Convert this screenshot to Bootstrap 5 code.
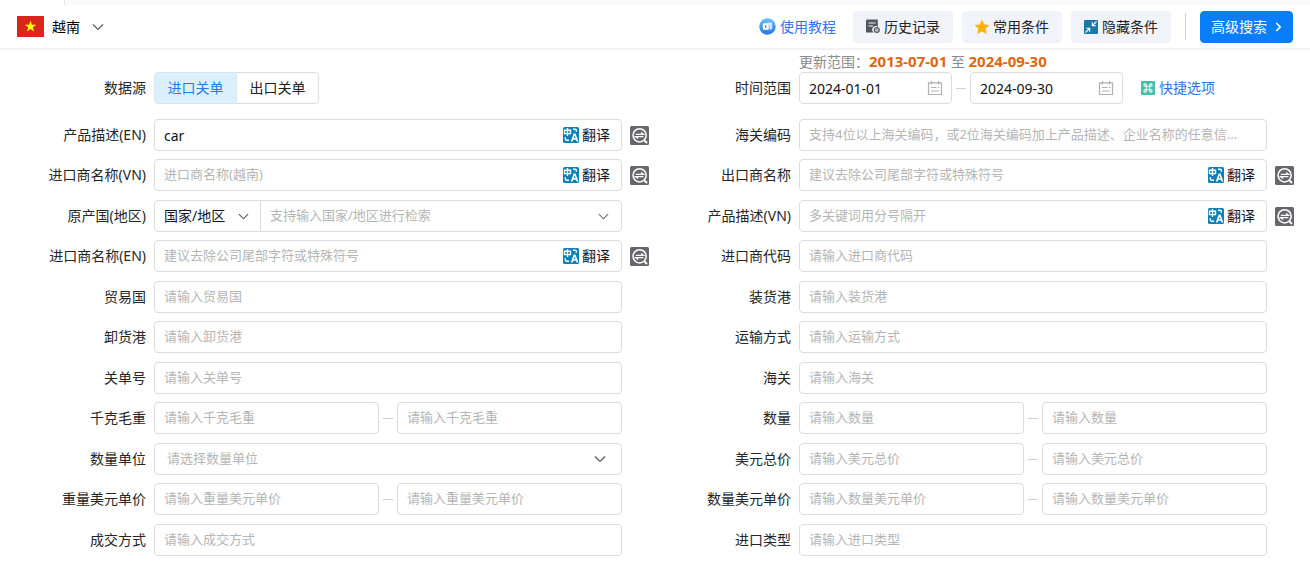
<!DOCTYPE html>
<html lang="zh-CN">
<head>
<meta charset="utf-8">
<meta name="viewport" content="width=device-width, initial-scale=1">
<title>越南 - 高级搜索</title>
<link href="https://cdn.jsdelivr.net/npm/bootstrap@5.3.0/dist/css/bootstrap.min.css" rel="stylesheet">
<script defer src="https://cdn.jsdelivr.net/npm/bootstrap@5.3.0/dist/js/bootstrap.bundle.min.js"></script>
<style>
  body { font-family: "Noto Sans", "Noto Sans CJK SC", sans-serif; font-size: 14px; line-height: 20px; color: #262626; background: #fff; }
  svg { flex: none; display: block; }
  .top-strip { height: 5px; margin-left: 64px; background: #fafafa; border-left: 1px solid #e4e4e4; }
  .topbar { min-height: 45px; padding: 0 17px; border-bottom: 2px solid #f2f2f2; }
  .btn { --bs-btn-font-size: 14px; --bs-btn-line-height: 20px; --bs-btn-padding-y: 5px; --bs-btn-padding-x: 12px; --bs-btn-border-radius: 4px; white-space: nowrap; }
  .btn-soft { --bs-btn-bg: #f1f3fa; --bs-btn-color: #222; --bs-btn-border-color: #f1f3fa; --bs-btn-hover-bg: #e6e9f5; }
  .btn-search { --bs-btn-bg: #087efb; --bs-btn-border-color: #087efb; --bs-btn-color: #fff; --bs-btn-padding-x: 10px; --bs-btn-hover-bg: #0069dc; --bs-btn-hover-color: #fff; }
  .blue-link { color: #3473e8; text-decoration: none; white-space: nowrap; }
  .quick-link { margin-left: 18px; }
  .split { width: 1px; height: 27px; background: #cfcfcf; margin: 0 5px; }
  .search-form { padding: 0 15px 8px 5px; }
  .stack-rows > .line { margin-bottom: 8px; }
  .stack-rows > .line:nth-of-type(even) { margin-bottom: 9px; }
  .line { display: flex; align-items: center; gap: 8px; height: 32px; }
  .first-line { margin-bottom: 15px; }
  .lbl { width: 141px; flex: none; text-align: right; white-space: nowrap; }
  .update-note { height: 22px; line-height: 22px; margin: 0 0 0 149px; color: #8a8a8a; white-space: nowrap; }
  .update-note strong { color: #e0660f; font-weight: 700; font-size: 15px; }
  .note-space { height: 22px; }
  .tail { width: 20px; flex: none; }
  .box { display: flex; align-items: center; flex: 1 1 0; min-width: 0; height: 32px; border: 1px solid #dcdcdc; border-radius: 4px; background: #fff; }
  .box > .form-control, .box > .form-select { border: 0; background-color: transparent; color: #111; font-size: 14px; line-height: 20px; padding: 0 9px; height: 30px; min-width: 0; border-radius: 4px; }
  .box > .form-control:placeholder-shown { font-size: 13px; padding-bottom: 2px; text-overflow: ellipsis; }
  .box > .form-control::placeholder { color: #b5b5b5; opacity: 1; }
  .box > .kind { width: 106px; flex: none; border-right: 1px solid #dcdcdc; border-radius: 4px 0 0 4px; padding-right: 24px; color: #15152a; background-position: right 11px center; background-size: 11px 11px; }
  .box > .unit { padding: 0 36px 2px 12px; font-size: 13px; color: #b5b5b5; background-position: right 15px center; background-size: 12px 12px; }
  .form-select { background-image: url("data:image/svg+xml,%3Csvg xmlns='http://www.w3.org/2000/svg' viewBox='0 0 12 12'%3E%3Cpath d='M1 3.5l5 5 5-5' fill='none' stroke='%23555' stroke-width='1.2'/%3E%3C/svg%3E"); }
  .dash { width: 10px; height: 1px; background: #cfcfcf; flex: none; margin: 0 4px; }
  .pair { display: flex; align-items: center; flex: 1 1 0; min-width: 0; }
  .date-box { flex: 0 1 153px; }
  .inner-end { margin-right: 8px; }
  .translate { border: 0; background: none; padding: 0; margin-right: 11px; color: #15152a; display: flex; align-items: center; gap: 3px; white-space: nowrap; line-height: 20px; }
  .plain-icon { border: 0; background: none; padding: 0; }
  .source-group { width: 165px; }
  .source-group .btn { --bs-btn-color: #222; --bs-btn-border-color: #dcdcdc; --bs-btn-bg: #fff; --bs-btn-active-bg: #dcf0fb; --bs-btn-active-color: #1a7df0; --bs-btn-active-border-color: #d3e9f5; flex: 1 1 0; --bs-btn-padding-x: 0; }
</style>
</head>
<body>
<svg width="0" height="0" class="position-absolute" aria-hidden="true">
  <symbol id="i-trans" viewBox="0 0 16 16">
    <rect width="16" height="16" rx="1.5" fill="#1080b8"/>
    <path d="M1.5 3.2h6v3.4h-6zM4.5 1v8" fill="none" stroke="#fff" stroke-width="1.4"/>
    <path d="M8.6 14.5l2.7-7.3h.6l2.7 7.3M9.6 12h4" fill="none" stroke="#fff" stroke-width="1.6"/>
    <path d="M10 2.2h2.3q1 0 1 1v1.6M2.3 10.3v1.5q0 1.4 1.4 1.4H6" fill="none" stroke="#fff" stroke-width="1.4"/>
  </symbol>
  <symbol id="i-scan" viewBox="0 0 19 19">
    <rect width="19" height="19" rx="1.5" fill="#66666c"/>
    <circle cx="9.6" cy="9.3" r="6.6" fill="none" stroke="#fff" stroke-width="1.5"/>
    <path d="M14 14l3 3" stroke="#fff" stroke-width="1.8"/>
    <path d="M5.8 8.4h7.8l-2.5-2M13.4 10.6H5.6l2.5 2" fill="none" stroke="#fff" stroke-width="1.3"/>
  </symbol>
  <symbol id="i-cal" viewBox="0 0 16 16">
    <path d="M1.5 2.8h13v11.7h-13zM4.5 1v3.5M11.5 1v3.5M4 7.5h5.5M11 7.5h1.5M4 11h8" fill="none" stroke="#b0b0b0" stroke-width="1.2"/>
  </symbol>
  <symbol id="i-down" viewBox="0 0 12 12"><path d="M1 3.5l5 5 5-5" fill="none" stroke="currentColor" stroke-width="1.1"/></symbol>
</svg>

<div class="top-strip"></div>
<header class="topbar d-flex align-items-center justify-content-between">
  <button type="button" class="plain-icon d-flex align-items-center">
    <svg width="27" height="21" viewBox="0 0 27 21"><rect width="27" height="21" fill="#da251d"/><path d="M13.5 4.6l1.4 4.1h4.4l-3.5 2.6 1.3 4.2-3.6-2.5-3.6 2.5 1.3-4.2-3.5-2.6h4.4z" fill="#ff0"/></svg>
    <span class="ms-2 me-2">越南</span>
    <svg width="12" height="12" class="ms-1" color="#555"><use href="#i-down"/></svg>
  </button>
  <div class="d-flex align-items-center" style="gap:9px">
    <a href="#" class="blue-link d-flex align-items-center gap-1 me-2">
      <svg width="17" height="17" viewBox="0 0 17 17"><defs><linearGradient id="g" x1="0" y1="0" x2="0" y2="1"><stop stop-color="#70c2fb"/><stop offset="1" stop-color="#2673e6"/></linearGradient></defs><circle cx="8.5" cy="8.5" r="8.3" fill="url(#g)"/><rect x="3.8" y="5.3" width="6" height="6.4" rx="1" fill="#fff"/><path d="M8.4 4.6h3.7q1 0 1 1v5q0 1-1 1h-1.6V7.2H8.4z" fill="#d3eafd"/><path d="M6.7 7v3" stroke="#4a9df2" stroke-width="1.4"/></svg>
      使用教程</a>
    <button type="button" class="btn btn-soft d-flex align-items-center gap-1">
      <svg width="14" height="15" viewBox="0 0 14 15"><path d="M1.2.5h10.6v7.2a3.5 3.5 0 0 0-4 5.8H0V1.7Q0 .5 1.2.5z" fill="#55565c"/><path d="M2.5 4h7M2.5 7h4.5" stroke="#f1f3fa" stroke-width="1"/><circle cx="10.8" cy="11" r="2.4" fill="none" stroke="#55565c" stroke-width="1.3"/><path d="M10.5 9.8v1.5h1.3" fill="none" stroke="#55565c" stroke-width=".8"/></svg>
      历史记录</button>
    <button type="button" class="btn btn-soft d-flex align-items-center gap-1">
      <svg width="14" height="14" viewBox="0 0 14 14"><path d="M7 .3l2 4.4 4.9.6-3.6 3.3.9 4.9L7 11.1l-4.2 2.4.9-4.9L.1 5.3 5 4.7z" fill="#fbb107" stroke="#fbb107" stroke-linejoin="round" stroke-width=".6"/></svg>
      常用条件</button>
    <button type="button" class="btn btn-soft d-flex align-items-center gap-1">
      <svg width="14" height="14" viewBox="0 0 14 14"><rect width="14" height="14" rx="1" fill="#1878a8"/><path d="M12.5 1.5L8.5 5.5M8.3 2.3v3.4h3.6M1.5 12.5l4-4M2.2 8.3h3.5v3.5" fill="none" stroke="#fff" stroke-width="1.1"/></svg>
      隐藏条件</button>
    <span class="split"></span>
    <button type="submit" form="search" class="btn btn-search d-flex align-items-center gap-2">高级搜索
      <svg width="7" height="10" viewBox="0 0 7 10"><path d="M1.2 1l4 4-4 4" fill="none" stroke="#fff" stroke-width="1.6"/></svg></button>
  </div>
</header>

<form id="search" class="search-form row g-0">
  <div class="col-6">
    <div class="note-space"></div>
    <div class="line first-line">
      <span class="lbl" id="src">数据源</span>
      <div class="btn-group source-group" role="group" aria-labelledby="src">
        <input type="radio" class="btn-check" name="source" id="s1" checked><label class="btn" for="s1">进口关单</label>
        <input type="radio" class="btn-check" name="source" id="s2"><label class="btn" for="s2">出口关单</label>
      </div>
    </div>
    <div class="stack-rows">
      <div class="line"><label class="lbl" for="a1">产品描述(EN)</label>
        <div class="box"><input class="form-control" id="a1" value="car"><button type="button" class="translate"><svg width="16" height="16"><use href="#i-trans"/></svg>翻译</button></div>
        <button type="button" class="plain-icon tail" aria-label="精确"><svg width="19" height="19"><use href="#i-scan"/></svg></button></div>
      <div class="line"><label class="lbl" for="a2">进口商名称(VN)</label>
        <div class="box"><input class="form-control" id="a2" placeholder="进口商名称(越南)"><button type="button" class="translate"><svg width="16" height="16"><use href="#i-trans"/></svg>翻译</button></div>
        <button type="button" class="plain-icon tail" aria-label="精确"><svg width="19" height="19"><use href="#i-scan"/></svg></button></div>
      <div class="line"><label class="lbl" for="a3">原产国(地区)</label>
        <div class="box"><select class="form-select kind" aria-label="类型"><option>国家/地区</option></select><input class="form-control" id="a3" placeholder="支持输入国家/地区进行检索"><svg width="11" height="11" class="me-2" color="#666"><use href="#i-down"/></svg><span class="ps-1"></span></div>
        <span class="tail"></span></div>
      <div class="line"><label class="lbl" for="a4">进口商名称(EN)</label>
        <div class="box"><input class="form-control" id="a4" placeholder="建议去除公司尾部字符或特殊符号"><button type="button" class="translate"><svg width="16" height="16"><use href="#i-trans"/></svg>翻译</button></div>
        <button type="button" class="plain-icon tail" aria-label="精确"><svg width="19" height="19"><use href="#i-scan"/></svg></button></div>
      <div class="line"><label class="lbl" for="a5">贸易国</label><div class="box"><input class="form-control" id="a5" placeholder="请输入贸易国"></div><span class="tail"></span></div>
      <div class="line"><label class="lbl" for="a6">卸货港</label><div class="box"><input class="form-control" id="a6" placeholder="请输入卸货港"></div><span class="tail"></span></div>
      <div class="line"><label class="lbl" for="a7">关单号</label><div class="box"><input class="form-control" id="a7" placeholder="请输入关单号"></div><span class="tail"></span></div>
      <div class="line"><label class="lbl" for="a8">千克毛重</label><div class="pair"><div class="box"><input class="form-control" id="a8" placeholder="请输入千克毛重"></div><span class="dash"></span><div class="box"><input class="form-control" aria-label="千克毛重上限" placeholder="请输入千克毛重"></div></div><span class="tail"></span></div>
      <div class="line"><label class="lbl" for="a9">数量单位</label><div class="box"><select class="form-select unit" id="a9"><option>请选择数量单位</option></select></div><span class="tail"></span></div>
      <div class="line"><label class="lbl" for="a10">重量美元单价</label><div class="pair"><div class="box"><input class="form-control" id="a10" placeholder="请输入重量美元单价"></div><span class="dash"></span><div class="box"><input class="form-control" aria-label="重量美元单价上限" placeholder="请输入重量美元单价"></div></div><span class="tail"></span></div>
      <div class="line"><label class="lbl" for="a11">成交方式</label><div class="box"><input class="form-control" id="a11" placeholder="请输入成交方式"></div><span class="tail"></span></div>
    </div>
  </div>

  <div class="col-6">
    <p class="update-note">更新范围：<strong>2013-07-01</strong> 至 <strong>2024-09-30</strong></p>
    <div class="line first-line">
      <label class="lbl" for="d1">时间范围</label>
      <div class="pair">
        <div class="box date-box"><input class="form-control" id="d1" value="2024-01-01"><svg width="16" height="16" class="inner-end"><use href="#i-cal"/></svg></div>
        <span class="dash"></span>
        <div class="box date-box"><input class="form-control" aria-label="结束日期" value="2024-09-30"><svg width="16" height="16" class="inner-end"><use href="#i-cal"/></svg></div>
        <a href="#" class="blue-link quick-link d-flex align-items-center gap-1"><svg width="14" height="14" viewBox="0 0 14 14"><rect width="14" height="14" rx="1" fill="#45bfa8"/><path d="M5.3 5.3H4.1a1.2 1.2 0 1 1 1.2-1.2v5.8a1.2 1.2 0 1 1-1.2-1.2h5.8a1.2 1.2 0 1 1-1.2 1.2V4.1a1.2 1.2 0 1 1 1.2 1.2z" fill="none" stroke="#fff" stroke-width="1.1"/></svg>快捷选项</a>
      </div>
    </div>
    <div class="stack-rows">
      <div class="line"><label class="lbl" for="b1">海关编码</label><div class="box"><input class="form-control" id="b1" placeholder="支持4位以上海关编码，或2位海关编码加上产品描述、企业名称的任意信..."></div><span class="tail"></span></div>
      <div class="line"><label class="lbl" for="b2">出口商名称</label>
        <div class="box"><input class="form-control" id="b2" placeholder="建议去除公司尾部字符或特殊符号"><button type="button" class="translate"><svg width="16" height="16"><use href="#i-trans"/></svg>翻译</button></div>
        <button type="button" class="plain-icon tail" aria-label="精确"><svg width="19" height="19"><use href="#i-scan"/></svg></button></div>
      <div class="line"><label class="lbl" for="b3">产品描述(VN)</label>
        <div class="box"><input class="form-control" id="b3" placeholder="多关键词用分号隔开"><button type="button" class="translate"><svg width="16" height="16"><use href="#i-trans"/></svg>翻译</button></div>
        <button type="button" class="plain-icon tail" aria-label="精确"><svg width="19" height="19"><use href="#i-scan"/></svg></button></div>
      <div class="line"><label class="lbl" for="b4">进口商代码</label><div class="box"><input class="form-control" id="b4" placeholder="请输入进口商代码"></div><span class="tail"></span></div>
      <div class="line"><label class="lbl" for="b5">装货港</label><div class="box"><input class="form-control" id="b5" placeholder="请输入装货港"></div><span class="tail"></span></div>
      <div class="line"><label class="lbl" for="b6">运输方式</label><div class="box"><input class="form-control" id="b6" placeholder="请输入运输方式"></div><span class="tail"></span></div>
      <div class="line"><label class="lbl" for="b7">海关</label><div class="box"><input class="form-control" id="b7" placeholder="请输入海关"></div><span class="tail"></span></div>
      <div class="line"><label class="lbl" for="b8">数量</label><div class="pair"><div class="box"><input class="form-control" id="b8" placeholder="请输入数量"></div><span class="dash"></span><div class="box"><input class="form-control" aria-label="数量上限" placeholder="请输入数量"></div></div><span class="tail"></span></div>
      <div class="line"><label class="lbl" for="b9">美元总价</label><div class="pair"><div class="box"><input class="form-control" id="b9" placeholder="请输入美元总价"></div><span class="dash"></span><div class="box"><input class="form-control" aria-label="美元总价上限" placeholder="请输入美元总价"></div></div><span class="tail"></span></div>
      <div class="line"><label class="lbl" for="b10">数量美元单价</label><div class="pair"><div class="box"><input class="form-control" id="b10" placeholder="请输入数量美元单价"></div><span class="dash"></span><div class="box"><input class="form-control" aria-label="数量美元单价上限" placeholder="请输入数量美元单价"></div></div><span class="tail"></span></div>
      <div class="line"><label class="lbl" for="b11">进口类型</label><div class="box"><input class="form-control" id="b11" placeholder="请输入进口类型"></div><span class="tail"></span></div>
    </div>
  </div>
</form>
</body>
</html>
